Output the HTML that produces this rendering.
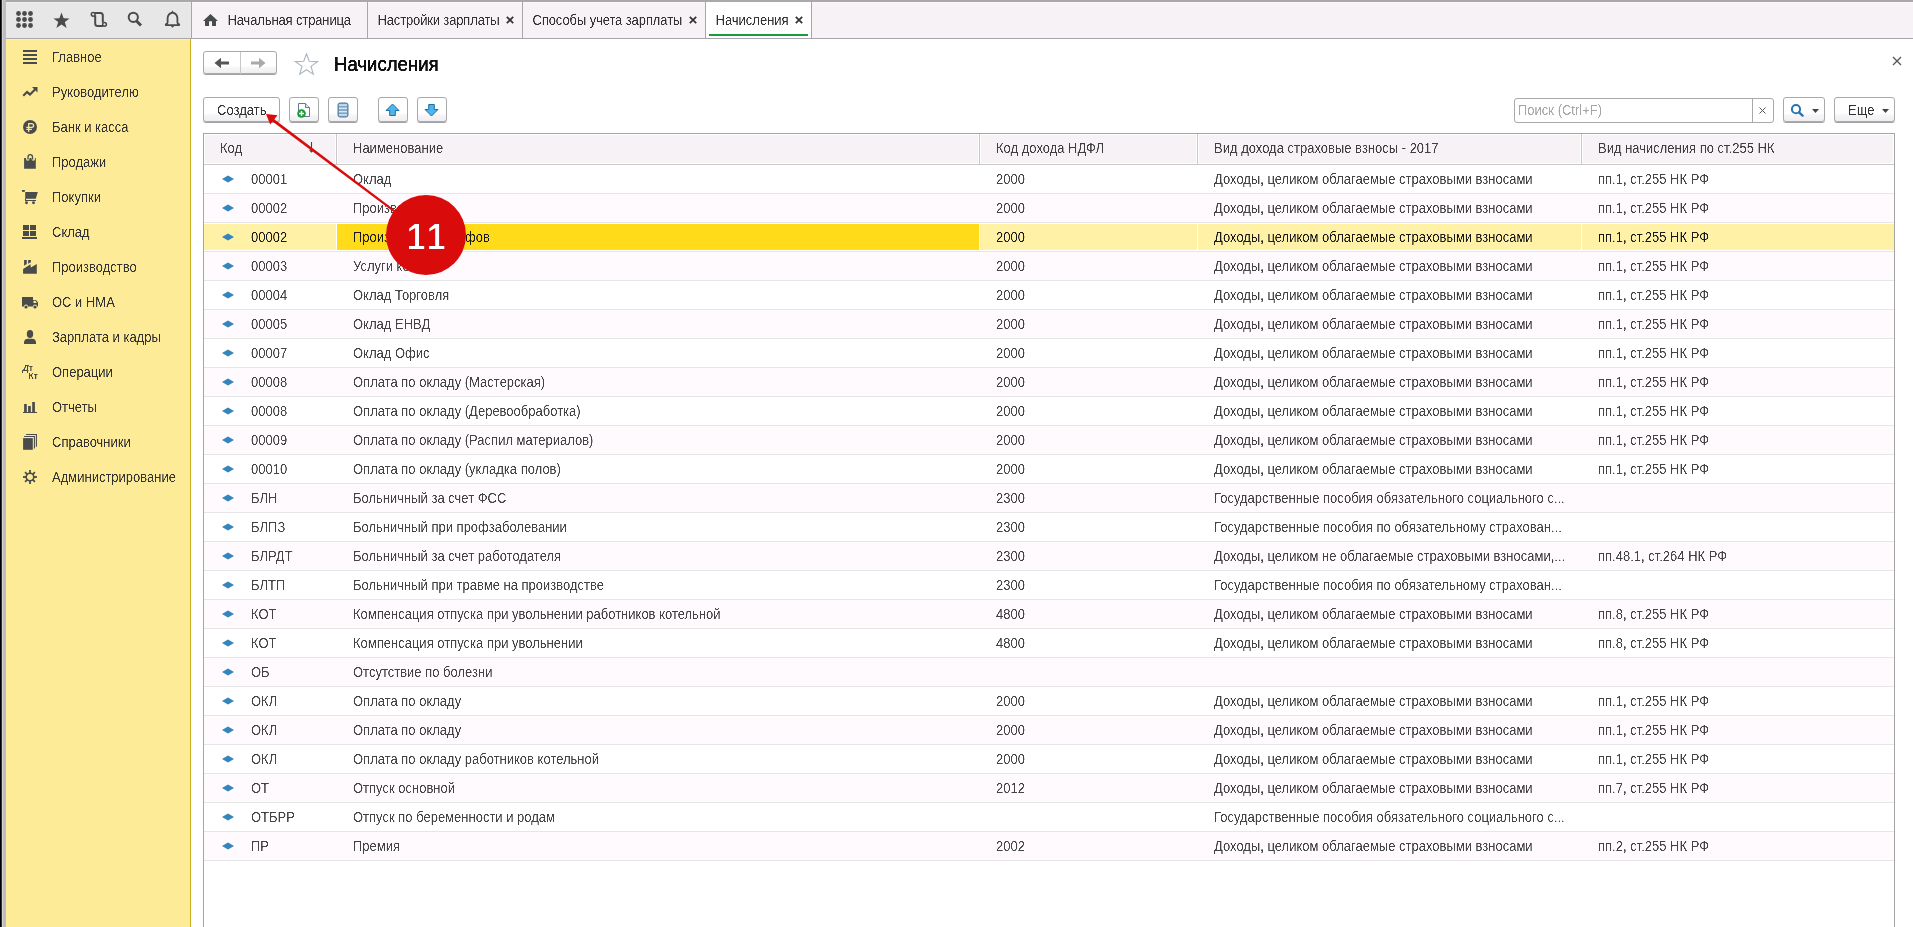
<!DOCTYPE html><html><head><meta charset="utf-8"><title>Начисления</title><style>
*{margin:0;padding:0;box-sizing:border-box}
html,body{width:1913px;height:927px;overflow:hidden;background:#fff}
body{position:relative;font-family:"Liberation Sans",sans-serif;font-size:13px;color:#333}
.a{position:absolute}
.t{position:absolute;white-space:nowrap;line-height:16px;filter:url(#crisp);transform:scaleY(1.07);transform-origin:0 12.5px}
svg{position:absolute;display:block}
.btn{position:absolute;border:1px solid #a9a9a9;border-radius:3px;background:linear-gradient(#fff 0,#fff 66%,#f6f4f7 76%,#f1eff2 100%);box-shadow:0 1px 0 #a3a3a3}
.row{position:absolute;left:204px;width:1690px;height:29px;border-bottom:1px solid #e6e6e6}
.row.ev{background:#fefafe}
.cm{-webkit-text-stroke:0.25px currentColor}
.cell{position:absolute;top:1px;height:28px;line-height:28px;white-space:nowrap;color:#333;filter:url(#crisp);transform:scaleY(1.07);transform-origin:0 18.5px}
.hd{position:absolute;top:134px;height:30px;background:#f7f2f6;border:1px solid #fff}
.hdt{position:absolute;top:0;line-height:28px;white-space:nowrap;color:#404040;filter:url(#crisp);transform:scaleY(1.07);transform-origin:0 19px}
</style></head><body>
<svg width="0" height="0" style="position:absolute;left:0;top:0"><defs><filter id="crisp" color-interpolation-filters="sRGB"><feComponentTransfer><feFuncA type="linear" slope="2.5" intercept="-0.8"/></feComponentTransfer></filter></defs></svg>
<div class="a" style="left:0;top:0;width:1px;height:927px;background:#000"></div>
<div class="a" style="left:1px;top:0;width:1px;height:927px;background:#333"></div>
<div class="a" style="left:2px;top:0;width:1px;height:927px;background:#d4d4d4"></div>
<div class="a" style="left:3px;top:0;width:3px;height:927px;background:#bdbdbd"></div>
<div class="a" style="left:6px;top:0;width:1907px;height:2px;background:#a9a9ad"></div>
<div class="a" style="left:6px;top:2px;width:185px;height:36px;background:#e7e7e7;border-top:1px solid #efefef"></div>
<div class="a" style="left:6px;top:38px;width:1907px;height:1px;background:#a8a6ab"></div>
<div class="a" style="left:191px;top:2px;width:1px;height:37px;background:#a8a6ab"></div>
<div class="a" style="left:192px;top:2px;width:1721px;height:36px;background:#f7f2f6;border-top:1px solid #fbf7fb"></div>
<div class="a" style="left:367px;top:2px;width:1px;height:36px;background:#a8a6ab"></div>
<div class="a" style="left:522px;top:2px;width:1px;height:36px;background:#a8a6ab"></div>
<div class="a" style="left:705px;top:2px;width:1px;height:36px;background:#a8a6ab"></div>
<div class="a" style="left:811px;top:2px;width:1px;height:36px;background:#a8a6ab"></div>
<div class="a" style="left:706px;top:2px;width:105px;height:36px;background:#fff"></div>
<div class="a" style="left:709px;top:34px;width:99px;height:2px;background:#1b9b3b"></div>
<svg style="left:16px;top:11px" width="17" height="17" viewBox="0 0 17 17" fill="#4a4c4b"><circle cx="2.5" cy="2.5" r="2.4"/><circle cx="2.5" cy="8.5" r="2.4"/><circle cx="2.5" cy="14.5" r="2.4"/><circle cx="8.5" cy="2.5" r="2.4"/><circle cx="8.5" cy="8.5" r="2.4"/><circle cx="8.5" cy="14.5" r="2.4"/><circle cx="14.5" cy="2.5" r="2.4"/><circle cx="14.5" cy="8.5" r="2.4"/><circle cx="14.5" cy="14.5" r="2.4"/></svg>
<svg style="left:53px;top:12px" width="17" height="17" viewBox="0 0 17 17" fill="#4a4c4b"><path d="M8.5 0.5 L10.6 6.2 L16.5 6.4 L11.8 10.1 L13.6 16 L8.5 12.6 L3.4 16 L5.2 10.1 L0.5 6.4 L6.4 6.2 Z"/></svg>
<svg style="left:90px;top:11px" width="18" height="17" viewBox="0 0 18 17" fill="none" stroke="#4a4c4b" stroke-width="2"><path d="M4.5 2 H10.5 Q12.8 2 12.8 4.5 V11.5"/><path d="M5.2 4.5 V12.5 Q5.2 15 7.8 15 H13"/><circle cx="3.2" cy="3.3" r="1.9" stroke-width="1.5" fill="#e7e7e7"/><circle cx="14.5" cy="13.3" r="1.9" stroke-width="1.5" fill="#e7e7e7"/></svg>
<svg style="left:126px;top:10px" width="18" height="18" viewBox="0 0 18 18"><circle cx="7.3" cy="7.3" r="4.6" fill="none" stroke="#4a4c4b" stroke-width="2"/><path d="M10.5 11 L15 15.5" stroke="#4a4c4b" stroke-width="3"/></svg>
<svg style="left:164px;top:10px" width="17" height="19" viewBox="0 0 17 19" fill="none" stroke="#4a4c4b" stroke-width="1.8"><path d="M8.5 2.6 Q3.6 3.6 3.6 8.5 V12.6 Q3.6 13.6 1.9 14.3 Q1.4 15.2 2.5 15.2 H14.5 Q15.6 15.2 15.1 14.3 Q13.4 13.6 13.4 12.6 V8.5 Q13.4 3.6 8.5 2.6 Z"/><path d="M6.8 3 L8.5 0.6 L10.2 3 Z" fill="#4a4c4b" stroke="none"/><path d="M6.8 16 L8.5 17.8 L10.2 16 Z" fill="#4a4c4b" stroke="none"/></svg>
<svg style="left:202px;top:13px" width="17" height="13" viewBox="0 0 17 13" fill="#4a4c4b"><path d="M8.5 0.9 L16 7.9 H14 V12.9 H10 V8.3 H7 V12.9 H3 V7.9 H1 Z"/></svg>
<div class="t" style="left:227.5px;top:13px;color:#333;letter-spacing:-0.13px">Начальная страница</div>
<div class="t" style="left:377.5px;top:13px;color:#333;letter-spacing:-0.15px">Настройки зарплаты</div>
<div class="t" style="left:532.5px;top:13px;color:#333;letter-spacing:-0.1px">Способы учета зарплаты</div>
<div class="t" style="left:715.5px;top:13px;color:#333">Начисления</div>
<svg style="left:506px;top:16px" width="8" height="8" viewBox="0 0 8 8" stroke="#333" stroke-width="1.7"><path d="M0.8 0.8 L7.2 7.2 M7.2 0.8 L0.8 7.2"/></svg>
<svg style="left:689px;top:16px" width="8" height="8" viewBox="0 0 8 8" stroke="#333" stroke-width="1.7"><path d="M0.8 0.8 L7.2 7.2 M7.2 0.8 L0.8 7.2"/></svg>
<svg style="left:795px;top:16px" width="8" height="8" viewBox="0 0 8 8" stroke="#333" stroke-width="1.7"><path d="M0.8 0.8 L7.2 7.2 M7.2 0.8 L0.8 7.2"/></svg>
<div class="a" style="left:6px;top:39px;width:184px;height:888px;background:#feeb98;border-top:1px solid #fff39c"></div>
<div class="a" style="left:190px;top:39px;width:1px;height:888px;background:#c9b11f"></div>
<div class="t" style="left:52px;top:50px;color:#333">Главное</div>
<div class="t" style="left:52px;top:85px;color:#333">Руководителю</div>
<div class="t" style="left:52px;top:120px;color:#333">Банк и касса</div>
<div class="t" style="left:52px;top:155px;color:#333">Продажи</div>
<div class="t" style="left:52px;top:190px;color:#333">Покупки</div>
<div class="t" style="left:52px;top:225px;color:#333">Склад</div>
<div class="t" style="left:52px;top:260px;color:#333">Производство</div>
<div class="t" style="left:52px;top:295px;color:#333">ОС и НМА</div>
<div class="t" style="left:52px;top:330px;color:#333">Зарплата и кадры</div>
<div class="t" style="left:52px;top:365px;color:#333">Операции</div>
<div class="t" style="left:52px;top:400px;color:#333">Отчеты</div>
<div class="t" style="left:52px;top:435px;color:#333">Справочники</div>
<div class="t" style="left:52px;top:470px;color:#333">Администрирование</div>
<svg style="left:22px;top:50px" width="16" height="16" viewBox="0 0 16 16" fill="#4a4c4b"><rect x="1" y="0" width="14" height="2"/><rect x="1" y="4" width="14" height="2"/><rect x="1" y="8" width="14" height="2"/><rect x="1" y="12" width="14" height="2"/></svg>
<svg style="left:22px;top:86px" width="16" height="16" viewBox="0 0 16 16" fill="#4a4c4b"><path d="M0.5 9 L5 4.5 L8 7 L12 3 L10 1 H15.5 V6.5 L13.5 4.5 L8 10 L5 7.5 L2 10.5 Z"/></svg>
<svg style="left:22px;top:119px" width="16" height="16" viewBox="0 0 16 16" fill="#4a4c4b"><circle cx="8" cy="8" r="7"/><path d="M6.7 13 V4.5 H9.5 Q11.6 4.5 11.6 6.4 Q11.6 8.3 9.5 8.3 H4.3 M4.3 10.4 H9.9" stroke="#feeb98" stroke-width="1.25" fill="none"/></svg>
<svg style="left:22px;top:154px" width="16" height="16" viewBox="0 0 16 16" fill="#4a4c4b"><path d="M2.1 4.1 H4 V4.6 Q4 6.8 5.75 6.8 Q7.5 6.8 7.5 4.6 V4.1 H9.5 V4.6 Q9.5 6.8 11.25 6.8 Q13 6.8 13 4.6 V4.1 H13.8 V14.8 H2.1 Z"/><path d="M6 5.6 V3 Q6 0.7 8.25 0.7 Q10.5 0.7 10.5 3 V5.6" fill="none" stroke="#4a4c4b" stroke-width="1.3"/></svg>
<svg style="left:22px;top:190px" width="16" height="16" viewBox="0 0 16 16" fill="#4a4c4b"><path d="M0 0 H3.2 V2.1 H15.8 L13.8 8.8 H3.2 V0 Z M0 0 H2.7 V1.6 H0 Z"/><path d="M0 0.2 H2.7 V1.7 H0 Z"/><rect x="3" y="8.5" width="1" height="2"/><rect x="3" y="10" width="11" height="1"/><circle cx="4.5" cy="12.7" r="1.45"/><circle cx="11.5" cy="12.7" r="1.45"/></svg>
<svg style="left:22px;top:225px" width="16" height="16" viewBox="0 0 16 16" fill="#4a4c4b"><rect x="1" y="0" width="6" height="5"/><rect x="8" y="0" width="6" height="5"/><rect x="1" y="6" width="6" height="5"/><rect x="8" y="6" width="6" height="5"/><rect x="0" y="12" width="15" height="2"/></svg>
<svg style="left:22px;top:260px" width="16" height="16" viewBox="0 0 16 16" fill="#4a4c4b"><path d="M2.1 0 H4.8 V4 L2.1 5.8 Z M6.1 0 H8.9 V2.2 L6.1 3.8 Z M1.1 9 L8.5 4.3 L8.8 7.5 L14.8 4 V13.7 H1.1 Z"/></svg>
<svg style="left:22px;top:297px" width="16" height="12" viewBox="0 0 16 12" fill="#4a4c4b"><path d="M0 0 H11 V3 H14 L16 5.5 V9.5 H15 A2 2 0 0 0 11 9.5 H6 A2 2 0 0 0 2 9.5 H0 Z M11.5 3.8 V6 H14.8 L13.4 3.8 Z"/><circle cx="4" cy="10" r="1.6"/><circle cx="13" cy="10" r="1.6"/></svg>
<svg style="left:22px;top:330px" width="16" height="16" viewBox="0 0 16 16" fill="#4a4c4b"><ellipse cx="8" cy="4" rx="3.2" ry="4"/><path d="M2 14 V12.5 Q2 9 6 8.8 H10 Q14 9 14 12.5 V14 Z"/></svg>
<div class="t" style="left:22.5px;top:362px;font-size:9px;font-weight:bold;color:#4a4c4b;line-height:12px;font-style:italic">Д<span style="font-style:normal;font-size:8px">т</span></div>
<div class="t" style="left:28.5px;top:370px;font-size:8.5px;font-weight:bold;color:#4a4c4b;line-height:12px">Кт</div>
<svg style="left:22px;top:402px" width="16" height="13" viewBox="0 0 16 13" fill="#4a4c4b"><rect x="2.1" y="2" width="2.7" height="8.5"/><rect x="6.1" y="4" width="2.7" height="6.5"/><rect x="10.2" y="0" width="2.7" height="10.5"/><rect x="1" y="10" width="14" height="1"/></svg>
<svg style="left:22px;top:434px" width="16" height="16" viewBox="0 0 16 16" fill="#4a4c4b"><rect x="1.1" y="4.1" width="9.7" height="11.7"/><path d="M2.1 2.5 H12.4 V14.6 M4.1 0.5 H14.4 V12.7" fill="none" stroke="#4a4c4b" stroke-width="1.1"/></svg>
<svg style="left:22px;top:469px" width="16" height="16" viewBox="0 0 16 16" fill="#4a4c4b"><circle cx="8" cy="8" r="3.8" fill="none" stroke="#4a4c4b" stroke-width="1.6"/><rect x="7.1" y="1" width="1.8" height="3.6" transform="rotate(0 8 8)"/><rect x="7.1" y="1" width="1.8" height="3.6" transform="rotate(45 8 8)"/><rect x="7.1" y="1" width="1.8" height="3.6" transform="rotate(90 8 8)"/><rect x="7.1" y="1" width="1.8" height="3.6" transform="rotate(135 8 8)"/><rect x="7.1" y="1" width="1.8" height="3.6" transform="rotate(180 8 8)"/><rect x="7.1" y="1" width="1.8" height="3.6" transform="rotate(225 8 8)"/><rect x="7.1" y="1" width="1.8" height="3.6" transform="rotate(270 8 8)"/><rect x="7.1" y="1" width="1.8" height="3.6" transform="rotate(315 8 8)"/></svg>
<div class="btn" style="left:203px;top:51px;width:74px;height:23px"></div>
<div class="a" style="left:240px;top:52px;width:1px;height:22px;background:#c8c8c8"></div>
<svg style="left:214px;top:57px" width="16" height="12" viewBox="0 0 16 12" fill="#555"><path d="M0.5 6 L7 0.8 V4.5 H15 V7.5 H7 V11.2 Z"/></svg>
<svg style="left:250px;top:57px" width="16" height="12" viewBox="0 0 16 12" fill="#a9a9a9"><path d="M15.5 6 L9 0.8 V4.5 H1 V7.5 H9 V11.2 Z"/></svg>
<svg style="left:294px;top:53px" width="25" height="23" viewBox="0 0 25 23" fill="#fff" stroke="#abb6c2" stroke-width="1.15"><path d="M12.5 0.8 L15.2 8.3 L23.5 8.6 L17 13.4 L19.3 21.2 L12.5 16.8 L5.7 21.2 L8 13.4 L1.5 8.6 L9.8 8.3 Z"/></svg>
<div class="t" style="left:334px;top:54px;font-size:18.6px;line-height:22px;color:#111;-webkit-text-stroke:0.45px #111;transform:scaleY(1.07);transform-origin:0 17px">Начисления</div>
<svg style="left:1892px;top:56px" width="10" height="10" viewBox="0 0 10 10" stroke="#555" stroke-width="1.3"><path d="M1 1 L9 9 M9 1 L1 9"/></svg>
<div class="btn" style="left:203px;top:97px;width:77px;height:25px"></div>
<div class="t" style="left:217px;top:103px;color:#333">Создать</div>
<div class="btn" style="left:289px;top:97px;width:30px;height:25px"></div>
<div class="btn" style="left:328px;top:97px;width:30px;height:25px"></div>
<div class="btn" style="left:378px;top:97px;width:30px;height:25px"></div>
<div class="btn" style="left:417px;top:97px;width:30px;height:25px"></div>
<svg style="left:297px;top:102px" width="14" height="16" viewBox="0 0 14 16"><path d="M1.5 1.5 H8.5 L12.5 5.5 V14.5 H1.5 Z" fill="#fff" stroke="#5f7c99" stroke-width="1"/><path d="M8.5 1.5 V5.5 H12.5" fill="#dfe8f0" stroke="#5f7c99" stroke-width="1"/><circle cx="4.5" cy="11.5" r="4.3" fill="#1c9a35"/><path d="M4.5 9 V14 M2 11.5 H7" stroke="#fff" stroke-width="1.4"/></svg>
<svg style="left:337px;top:102px" width="12" height="16" viewBox="0 0 12 16"><rect x="1" y="1" width="10" height="14" rx="2" fill="#7fa3c2" stroke="#4f7ba0" stroke-width="1"/><rect x="2" y="2.3" width="8" height="1.5" fill="#dbe9f6"/><rect x="2" y="5.6" width="8" height="1.5" fill="#dbe9f6"/><rect x="2" y="8.9" width="8" height="1.5" fill="#dbe9f6"/><rect x="2" y="12.2" width="8" height="1.5" fill="#dbe9f6"/></svg>
<svg style="left:385px;top:103px" width="15" height="14" viewBox="0 0 15 14"><path d="M7.5 1 L14 7.5 H10.3 V12.5 H4.7 V7.5 H1 Z" fill="#4db4ec" stroke="#1d6fa7" stroke-width="1" stroke-linejoin="round"/></svg>
<svg style="left:424px;top:103px" width="15" height="14" viewBox="0 0 15 14"><path d="M7.5 13 L14 6.5 H10.3 V1.5 H4.7 V6.5 H1 Z" fill="#4db4ec" stroke="#1d6fa7" stroke-width="1" stroke-linejoin="round"/></svg>
<div class="a" style="left:1514px;top:98px;width:260px;height:25px;border:1px solid #a9a9a9;border-radius:3px;background:#fff"></div>
<div class="a" style="left:1752px;top:99px;width:1px;height:23px;background:#a9a9a9"></div>
<div class="t" style="left:1518px;top:103px;color:#a6a6a6">Поиск (Ctrl+F)</div>
<svg style="left:1759px;top:107px" width="7" height="7" viewBox="0 0 7 7" stroke="#555" stroke-width="1"><path d="M0.5 0.5 L6.5 6.5 M6.5 0.5 L0.5 6.5"/></svg>
<div class="btn" style="left:1783px;top:97px;width:42px;height:25px"></div>
<svg style="left:1790px;top:103px" width="15" height="14" viewBox="0 0 15 14"><circle cx="6" cy="6.2" r="4.1" fill="none" stroke="#2a74ae" stroke-width="2"/><path d="M9 9.3 L12.6 12.6" stroke="#2a74ae" stroke-width="2.4" stroke-linecap="round"/></svg>
<svg style="left:1812px;top:109px" width="7" height="4" viewBox="0 0 7 4" fill="#444"><path d="M0 0 H7 L3.5 4 Z"/></svg>
<div class="btn" style="left:1834px;top:97px;width:61px;height:25px"></div>
<div class="t" style="left:1848px;top:103px;color:#333">Еще</div>
<svg style="left:1882px;top:109px" width="7" height="4" viewBox="0 0 7 4" fill="#444"><path d="M0 0 H7 L3.5 4 Z"/></svg>
<div class="a" style="left:203px;top:133px;width:1692px;height:794px;border:1px solid #a5a5a5;border-bottom:none;background:#fff"></div>
<div class="hd" style="left:204px;width:132px"></div>
<div class="hd" style="left:337px;width:642px"></div>
<div class="hd" style="left:980px;width:217px"></div>
<div class="hd" style="left:1198px;width:383px"></div>
<div class="hd" style="left:1582px;width:312px"></div>
<div class="a" style="left:336px;top:134px;width:1px;height:30px;background:#c9c9c9"></div>
<div class="a" style="left:979px;top:134px;width:1px;height:30px;background:#c9c9c9"></div>
<div class="a" style="left:1197px;top:134px;width:1px;height:30px;background:#c9c9c9"></div>
<div class="a" style="left:1581px;top:134px;width:1px;height:30px;background:#c9c9c9"></div>
<div class="a" style="left:204px;top:164px;width:1690px;height:1px;background:#c9c9c9"></div>
<div class="hdt" style="left:220px;top:134px;line-height:29px">Код</div>
<div class="hdt" style="left:353px;top:134px;line-height:29px">Наименование</div>
<div class="hdt" style="left:996px;top:134px;line-height:29px">Код дохода НДФЛ</div>
<div class="hdt" style="left:1214px;top:134px;line-height:29px">Вид дохода страховые взносы - 2017</div>
<div class="hdt" style="left:1598px;top:134px;line-height:29px">Вид начисления по ст.255 НК</div>
<svg style="left:308px;top:142px" width="7" height="11" viewBox="0 0 7 11" stroke="#444" stroke-width="1.1" fill="none"><path d="M3.5 0 V10 M1.5 7.8 L3.5 10 L5.5 7.8"/></svg>
<div class="row" style="top:165px;height:29px">
<svg style="left:18px;top:10px" width="12" height="8" viewBox="0 0 12 8" fill="#3585bd"><path d="M0 4 L6 0.5 L12 4 L6 7.5 Z"/></svg>
<div class="cell" style="left:47px;color:#444">00001</div>
<div class="cell" style="left:149px;color:#444">Оклад</div>
<div class="cell" style="left:792px;color:#444">2000</div>
<div class="cell" style="left:1010px;color:#444">Доходы<span class="cm">,</span> целиком облагаемые страховыми взносами</div>
<div class="cell" style="left:1394px;color:#444">пп.1<span class="cm">,</span> ст.255 НК РФ</div>
</div>
<div class="row ev" style="top:194px;height:29px">
<svg style="left:18px;top:10px" width="12" height="8" viewBox="0 0 12 8" fill="#3585bd"><path d="M0 4 L6 0.5 L12 4 L6 7.5 Z"/></svg>
<div class="cell" style="left:47px;color:#444">00002</div>
<div class="cell" style="left:149px;color:#444">Производство</div>
<div class="cell" style="left:792px;color:#444">2000</div>
<div class="cell" style="left:1010px;color:#444">Доходы<span class="cm">,</span> целиком облагаемые страховыми взносами</div>
<div class="cell" style="left:1394px;color:#444">пп.1<span class="cm">,</span> ст.255 НК РФ</div>
</div>
<div class="row" style="top:223px;height:29px">
<div class="a" style="left:0;top:1px;width:132px;height:26px;background:#fff2a6"></div>
<div class="a" style="left:133px;top:1px;width:642px;height:26px;background:#ffdb19"></div>
<div class="a" style="left:776px;top:1px;width:217px;height:26px;background:#fff2a6"></div>
<div class="a" style="left:994px;top:1px;width:383px;height:26px;background:#fff2a6"></div>
<div class="a" style="left:1378px;top:1px;width:312px;height:26px;background:#fff2a6"></div>
<svg style="left:18px;top:10px" width="12" height="8" viewBox="0 0 12 8" fill="#3585bd"><path d="M0 4 L6 0.5 L12 4 L6 7.5 Z"/></svg>
<div class="cell" style="left:47px;color:#1a1a1a">00002</div>
<div class="cell" style="left:149px;color:#1a1a1a">Производство шкафов</div>
<div class="cell" style="left:792px;color:#1a1a1a">2000</div>
<div class="cell" style="left:1010px;color:#1a1a1a">Доходы<span class="cm">,</span> целиком облагаемые страховыми взносами</div>
<div class="cell" style="left:1394px;color:#1a1a1a">пп.1<span class="cm">,</span> ст.255 НК РФ</div>
</div>
<div class="row ev" style="top:252px;height:29px">
<svg style="left:18px;top:10px" width="12" height="8" viewBox="0 0 12 8" fill="#3585bd"><path d="M0 4 L6 0.5 L12 4 L6 7.5 Z"/></svg>
<div class="cell" style="left:47px;color:#444">00003</div>
<div class="cell" style="left:149px;color:#444">Услуги конс</div>
<div class="cell" style="left:792px;color:#444">2000</div>
<div class="cell" style="left:1010px;color:#444">Доходы<span class="cm">,</span> целиком облагаемые страховыми взносами</div>
<div class="cell" style="left:1394px;color:#444">пп.1<span class="cm">,</span> ст.255 НК РФ</div>
</div>
<div class="row" style="top:281px;height:29px">
<svg style="left:18px;top:10px" width="12" height="8" viewBox="0 0 12 8" fill="#3585bd"><path d="M0 4 L6 0.5 L12 4 L6 7.5 Z"/></svg>
<div class="cell" style="left:47px;color:#444">00004</div>
<div class="cell" style="left:149px;color:#444">Оклад Торговля</div>
<div class="cell" style="left:792px;color:#444">2000</div>
<div class="cell" style="left:1010px;color:#444">Доходы<span class="cm">,</span> целиком облагаемые страховыми взносами</div>
<div class="cell" style="left:1394px;color:#444">пп.1<span class="cm">,</span> ст.255 НК РФ</div>
</div>
<div class="row ev" style="top:310px;height:29px">
<svg style="left:18px;top:10px" width="12" height="8" viewBox="0 0 12 8" fill="#3585bd"><path d="M0 4 L6 0.5 L12 4 L6 7.5 Z"/></svg>
<div class="cell" style="left:47px;color:#444">00005</div>
<div class="cell" style="left:149px;color:#444">Оклад ЕНВД</div>
<div class="cell" style="left:792px;color:#444">2000</div>
<div class="cell" style="left:1010px;color:#444">Доходы<span class="cm">,</span> целиком облагаемые страховыми взносами</div>
<div class="cell" style="left:1394px;color:#444">пп.1<span class="cm">,</span> ст.255 НК РФ</div>
</div>
<div class="row" style="top:339px;height:29px">
<svg style="left:18px;top:10px" width="12" height="8" viewBox="0 0 12 8" fill="#3585bd"><path d="M0 4 L6 0.5 L12 4 L6 7.5 Z"/></svg>
<div class="cell" style="left:47px;color:#444">00007</div>
<div class="cell" style="left:149px;color:#444">Оклад Офис</div>
<div class="cell" style="left:792px;color:#444">2000</div>
<div class="cell" style="left:1010px;color:#444">Доходы<span class="cm">,</span> целиком облагаемые страховыми взносами</div>
<div class="cell" style="left:1394px;color:#444">пп.1<span class="cm">,</span> ст.255 НК РФ</div>
</div>
<div class="row ev" style="top:368px;height:29px">
<svg style="left:18px;top:10px" width="12" height="8" viewBox="0 0 12 8" fill="#3585bd"><path d="M0 4 L6 0.5 L12 4 L6 7.5 Z"/></svg>
<div class="cell" style="left:47px;color:#444">00008</div>
<div class="cell" style="left:149px;color:#444">Оплата по окладу (Мастерская)</div>
<div class="cell" style="left:792px;color:#444">2000</div>
<div class="cell" style="left:1010px;color:#444">Доходы<span class="cm">,</span> целиком облагаемые страховыми взносами</div>
<div class="cell" style="left:1394px;color:#444">пп.1<span class="cm">,</span> ст.255 НК РФ</div>
</div>
<div class="row" style="top:397px;height:29px">
<svg style="left:18px;top:10px" width="12" height="8" viewBox="0 0 12 8" fill="#3585bd"><path d="M0 4 L6 0.5 L12 4 L6 7.5 Z"/></svg>
<div class="cell" style="left:47px;color:#444">00008</div>
<div class="cell" style="left:149px;color:#444">Оплата по окладу (Деревообработка)</div>
<div class="cell" style="left:792px;color:#444">2000</div>
<div class="cell" style="left:1010px;color:#444">Доходы<span class="cm">,</span> целиком облагаемые страховыми взносами</div>
<div class="cell" style="left:1394px;color:#444">пп.1<span class="cm">,</span> ст.255 НК РФ</div>
</div>
<div class="row ev" style="top:426px;height:29px">
<svg style="left:18px;top:10px" width="12" height="8" viewBox="0 0 12 8" fill="#3585bd"><path d="M0 4 L6 0.5 L12 4 L6 7.5 Z"/></svg>
<div class="cell" style="left:47px;color:#444">00009</div>
<div class="cell" style="left:149px;color:#444">Оплата по окладу (Распил материалов)</div>
<div class="cell" style="left:792px;color:#444">2000</div>
<div class="cell" style="left:1010px;color:#444">Доходы<span class="cm">,</span> целиком облагаемые страховыми взносами</div>
<div class="cell" style="left:1394px;color:#444">пп.1<span class="cm">,</span> ст.255 НК РФ</div>
</div>
<div class="row" style="top:455px;height:29px">
<svg style="left:18px;top:10px" width="12" height="8" viewBox="0 0 12 8" fill="#3585bd"><path d="M0 4 L6 0.5 L12 4 L6 7.5 Z"/></svg>
<div class="cell" style="left:47px;color:#444">00010</div>
<div class="cell" style="left:149px;color:#444">Оплата по окладу (укладка полов)</div>
<div class="cell" style="left:792px;color:#444">2000</div>
<div class="cell" style="left:1010px;color:#444">Доходы<span class="cm">,</span> целиком облагаемые страховыми взносами</div>
<div class="cell" style="left:1394px;color:#444">пп.1<span class="cm">,</span> ст.255 НК РФ</div>
</div>
<div class="row ev" style="top:484px;height:29px">
<svg style="left:18px;top:10px" width="12" height="8" viewBox="0 0 12 8" fill="#3585bd"><path d="M0 4 L6 0.5 L12 4 L6 7.5 Z"/></svg>
<div class="cell" style="left:47px;color:#444">БЛН</div>
<div class="cell" style="left:149px;color:#444">Больничный за счет ФСС</div>
<div class="cell" style="left:792px;color:#444">2300</div>
<div class="cell" style="left:1010px;color:#444">Государственные пособия обязательного социального с...</div>
</div>
<div class="row" style="top:513px;height:29px">
<svg style="left:18px;top:10px" width="12" height="8" viewBox="0 0 12 8" fill="#3585bd"><path d="M0 4 L6 0.5 L12 4 L6 7.5 Z"/></svg>
<div class="cell" style="left:47px;color:#444">БЛПЗ</div>
<div class="cell" style="left:149px;color:#444">Больничный при профзаболевании</div>
<div class="cell" style="left:792px;color:#444">2300</div>
<div class="cell" style="left:1010px;color:#444">Государственные пособия по обязательному страхован...</div>
</div>
<div class="row ev" style="top:542px;height:29px">
<svg style="left:18px;top:10px" width="12" height="8" viewBox="0 0 12 8" fill="#3585bd"><path d="M0 4 L6 0.5 L12 4 L6 7.5 Z"/></svg>
<div class="cell" style="left:47px;color:#444">БЛРДТ</div>
<div class="cell" style="left:149px;color:#444">Больничный за счет работодателя</div>
<div class="cell" style="left:792px;color:#444">2300</div>
<div class="cell" style="left:1010px;color:#444">Доходы<span class="cm">,</span> целиком не облагаемые страховыми взносами<span class="cm">,</span>...</div>
<div class="cell" style="left:1394px;color:#444">пп.48.1<span class="cm">,</span> ст.264 НК РФ</div>
</div>
<div class="row" style="top:571px;height:29px">
<svg style="left:18px;top:10px" width="12" height="8" viewBox="0 0 12 8" fill="#3585bd"><path d="M0 4 L6 0.5 L12 4 L6 7.5 Z"/></svg>
<div class="cell" style="left:47px;color:#444">БЛТП</div>
<div class="cell" style="left:149px;color:#444">Больничный при травме на производстве</div>
<div class="cell" style="left:792px;color:#444">2300</div>
<div class="cell" style="left:1010px;color:#444">Государственные пособия по обязательному страхован...</div>
</div>
<div class="row ev" style="top:600px;height:29px">
<svg style="left:18px;top:10px" width="12" height="8" viewBox="0 0 12 8" fill="#3585bd"><path d="M0 4 L6 0.5 L12 4 L6 7.5 Z"/></svg>
<div class="cell" style="left:47px;color:#444">КОТ</div>
<div class="cell" style="left:149px;color:#444">Компенсация отпуска при увольнении работников котельной</div>
<div class="cell" style="left:792px;color:#444">4800</div>
<div class="cell" style="left:1010px;color:#444">Доходы<span class="cm">,</span> целиком облагаемые страховыми взносами</div>
<div class="cell" style="left:1394px;color:#444">пп.8<span class="cm">,</span> ст.255 НК РФ</div>
</div>
<div class="row" style="top:629px;height:29px">
<svg style="left:18px;top:10px" width="12" height="8" viewBox="0 0 12 8" fill="#3585bd"><path d="M0 4 L6 0.5 L12 4 L6 7.5 Z"/></svg>
<div class="cell" style="left:47px;color:#444">КОТ</div>
<div class="cell" style="left:149px;color:#444">Компенсация отпуска при увольнении</div>
<div class="cell" style="left:792px;color:#444">4800</div>
<div class="cell" style="left:1010px;color:#444">Доходы<span class="cm">,</span> целиком облагаемые страховыми взносами</div>
<div class="cell" style="left:1394px;color:#444">пп.8<span class="cm">,</span> ст.255 НК РФ</div>
</div>
<div class="row ev" style="top:658px;height:29px">
<svg style="left:18px;top:10px" width="12" height="8" viewBox="0 0 12 8" fill="#3585bd"><path d="M0 4 L6 0.5 L12 4 L6 7.5 Z"/></svg>
<div class="cell" style="left:47px;color:#444">ОБ</div>
<div class="cell" style="left:149px;color:#444">Отсутствие по болезни</div>
</div>
<div class="row" style="top:687px;height:29px">
<svg style="left:18px;top:10px" width="12" height="8" viewBox="0 0 12 8" fill="#3585bd"><path d="M0 4 L6 0.5 L12 4 L6 7.5 Z"/></svg>
<div class="cell" style="left:47px;color:#444">ОКЛ</div>
<div class="cell" style="left:149px;color:#444">Оплата по окладу</div>
<div class="cell" style="left:792px;color:#444">2000</div>
<div class="cell" style="left:1010px;color:#444">Доходы<span class="cm">,</span> целиком облагаемые страховыми взносами</div>
<div class="cell" style="left:1394px;color:#444">пп.1<span class="cm">,</span> ст.255 НК РФ</div>
</div>
<div class="row ev" style="top:716px;height:29px">
<svg style="left:18px;top:10px" width="12" height="8" viewBox="0 0 12 8" fill="#3585bd"><path d="M0 4 L6 0.5 L12 4 L6 7.5 Z"/></svg>
<div class="cell" style="left:47px;color:#444">ОКЛ</div>
<div class="cell" style="left:149px;color:#444">Оплата по окладу</div>
<div class="cell" style="left:792px;color:#444">2000</div>
<div class="cell" style="left:1010px;color:#444">Доходы<span class="cm">,</span> целиком облагаемые страховыми взносами</div>
<div class="cell" style="left:1394px;color:#444">пп.1<span class="cm">,</span> ст.255 НК РФ</div>
</div>
<div class="row" style="top:745px;height:29px">
<svg style="left:18px;top:10px" width="12" height="8" viewBox="0 0 12 8" fill="#3585bd"><path d="M0 4 L6 0.5 L12 4 L6 7.5 Z"/></svg>
<div class="cell" style="left:47px;color:#444">ОКЛ</div>
<div class="cell" style="left:149px;color:#444">Оплата по окладу работников котельной</div>
<div class="cell" style="left:792px;color:#444">2000</div>
<div class="cell" style="left:1010px;color:#444">Доходы<span class="cm">,</span> целиком облагаемые страховыми взносами</div>
<div class="cell" style="left:1394px;color:#444">пп.1<span class="cm">,</span> ст.255 НК РФ</div>
</div>
<div class="row ev" style="top:774px;height:29px">
<svg style="left:18px;top:10px" width="12" height="8" viewBox="0 0 12 8" fill="#3585bd"><path d="M0 4 L6 0.5 L12 4 L6 7.5 Z"/></svg>
<div class="cell" style="left:47px;color:#444">ОТ</div>
<div class="cell" style="left:149px;color:#444">Отпуск основной</div>
<div class="cell" style="left:792px;color:#444">2012</div>
<div class="cell" style="left:1010px;color:#444">Доходы<span class="cm">,</span> целиком облагаемые страховыми взносами</div>
<div class="cell" style="left:1394px;color:#444">пп.7<span class="cm">,</span> ст.255 НК РФ</div>
</div>
<div class="row" style="top:803px;height:29px">
<svg style="left:18px;top:10px" width="12" height="8" viewBox="0 0 12 8" fill="#3585bd"><path d="M0 4 L6 0.5 L12 4 L6 7.5 Z"/></svg>
<div class="cell" style="left:47px;color:#444">ОТБРР</div>
<div class="cell" style="left:149px;color:#444">Отпуск по беременности и родам</div>
<div class="cell" style="left:1010px;color:#444">Государственные пособия обязательного социального с...</div>
</div>
<div class="row ev" style="top:832px;height:29px">
<svg style="left:18px;top:10px" width="12" height="8" viewBox="0 0 12 8" fill="#3585bd"><path d="M0 4 L6 0.5 L12 4 L6 7.5 Z"/></svg>
<div class="cell" style="left:47px;color:#444">ПР</div>
<div class="cell" style="left:149px;color:#444">Премия</div>
<div class="cell" style="left:792px;color:#444">2002</div>
<div class="cell" style="left:1010px;color:#444">Доходы<span class="cm">,</span> целиком облагаемые страховыми взносами</div>
<div class="cell" style="left:1394px;color:#444">пп.2<span class="cm">,</span> ст.255 НК РФ</div>
</div>
<svg style="left:0;top:0" width="1913" height="927" viewBox="0 0 1913 927"><path d="M271.13 120.56 L272.87 118.24 L400.63 214.56 L399.37 216.24 Z" fill="#d90b0b"/><path d="M266 114 L277.5 115.2 L270.2 124.5 Z" fill="#d90b0b"/><circle cx="426" cy="235" r="40" fill="#d90b0b"/></svg>
<svg style="left:408.8px;top:223.8px" width="36" height="26" viewBox="0 0 36 26" fill="#fff"><path d="M5.80 0 H10.00 V22.1 H15.20 V25.1 H0.00 V22.1 H6.10 V3.9 L0.20 7.4 V4.4 Z M25.90 0 H30.10 V22.1 H35.30 V25.1 H20.10 V22.1 H26.20 V3.9 L20.30 7.4 V4.4 Z"/></svg>
</body></html>
